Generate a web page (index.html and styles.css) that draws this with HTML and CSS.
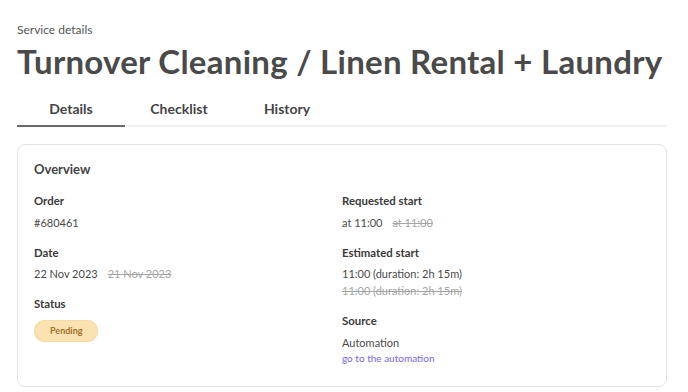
FILE: index.html
```html
<!DOCTYPE html>
<html lang="en">
<head>
  <meta charset="UTF-8">
  <meta name="viewport" content="width=device-width, initial-scale=1.0">
  <title>Service details</title>
  <link rel="stylesheet" href="styles.css">
</head>
<body>
  <div class="page">
    <p class="crumb">Service details</p>
    <h1 class="title">Turnover Cleaning / Linen Rental + Laundry</h1>

    <div class="tabs">
      <div class="tab active">Details</div>
      <div class="tab">Checklist</div>
      <div class="tab">History</div>
    </div>

    <div class="card">
      <h2 class="card-title">Overview</h2>
      <div class="grid">
        <div class="col">
          <div class="field">
            <div class="label">Order</div>
            <div class="value">#680461</div>
          </div>
          <div class="field">
            <div class="label">Date</div>
            <div class="value">22 Nov 2023<span class="old">21 Nov 2023</span></div>
          </div>
          <div class="field">
            <div class="label">Status</div>
            <span class="pill">Pending</span>
          </div>
        </div>
        <div class="col">
          <div class="field">
            <div class="label">Requested start</div>
            <div class="value">at 11:00<span class="old">at 11:00</span></div>
          </div>
          <div class="field">
            <div class="label">Estimated start</div>
            <div class="value">11:00 (duration: 2h 15m)</div>
            <div class="value old">11:00 (duration: 2h 15m)</div>
          </div>
          <div class="field">
            <div class="label">Source</div>
            <div class="value">Automation</div>
            <a class="link" href="#">go to the automation</a>
          </div>
        </div>
      </div>
    </div>
  </div>
</body>
</html>
```

FILE: styles.css
```css
body {
  margin: 0;
  font-family: Lato, "Noto Sans", sans-serif;
  color: #444;
  background: #fff;
}

.page {
  padding: 22px 21px 0 17px;
}

.crumb {
  margin: 0;
  font-size: 12px;
  line-height: 16px;
  color: #555;
}

.title {
  margin: 3px 0 0;
  font-size: 33px;
  line-height: 40px;
  font-weight: 700;
  letter-spacing: 0.27px;
  white-space: nowrap;
  color: #4a4a4a;
}

.tabs {
  display: flex;
  margin-top: 18px;
  border-bottom: 2px solid #f0f0f0;
}

.tab {
  width: 108px;
  text-align: center;
  font-size: 14px;
  font-weight: 700;
  line-height: 20px;
  padding-bottom: 6px;
  color: #444;
  margin-bottom: -2px;
  border-bottom: 2px solid transparent;
}

.tab.active {
  border-bottom-color: #6a6a6a;
}

.card {
  margin-top: 17px;
  border: 1px solid #e3e3e3;
  border-radius: 8px;
  padding: 15px 16px 21px;
}

.card-title {
  margin: 0 0 15px;
  font-size: 13px;
  line-height: 18px;
  font-weight: 700;
  color: #444;
}

.grid {
  display: grid;
  grid-template-columns: 1fr 1fr;
}

.field {
  margin-bottom: 14px;
}

.field:last-child {
  margin-bottom: 0;
}

.label {
  font-size: 11.4px;
  line-height: 16px;
  font-weight: 700;
  color: #3a3a3a;
  margin-bottom: 5.5px;
}

.value {
  font-size: 11px;
  line-height: 16px;
  color: #4a4a4a;
}

.old {
  color: #a5a5a5;
  text-decoration: line-through;
  margin-left: 10px;
}

.value.old {
  margin-left: 0;
  line-height: 17px;
}

.pill {
  display: inline-block;
  padding: 0 16px;
  height: 22px;
  line-height: 22px;
  border-radius: 11px;
  background: #fbe3b1;
  box-shadow: inset 0 0 0 1px #f6dca6;
  color: #a06f2a;
  font-size: 9px;
  font-weight: 700;
}

.link {
  display: block;
  font-size: 10px;
  line-height: 14px;
  color: #7866f0;
  text-decoration: none;
}
```
